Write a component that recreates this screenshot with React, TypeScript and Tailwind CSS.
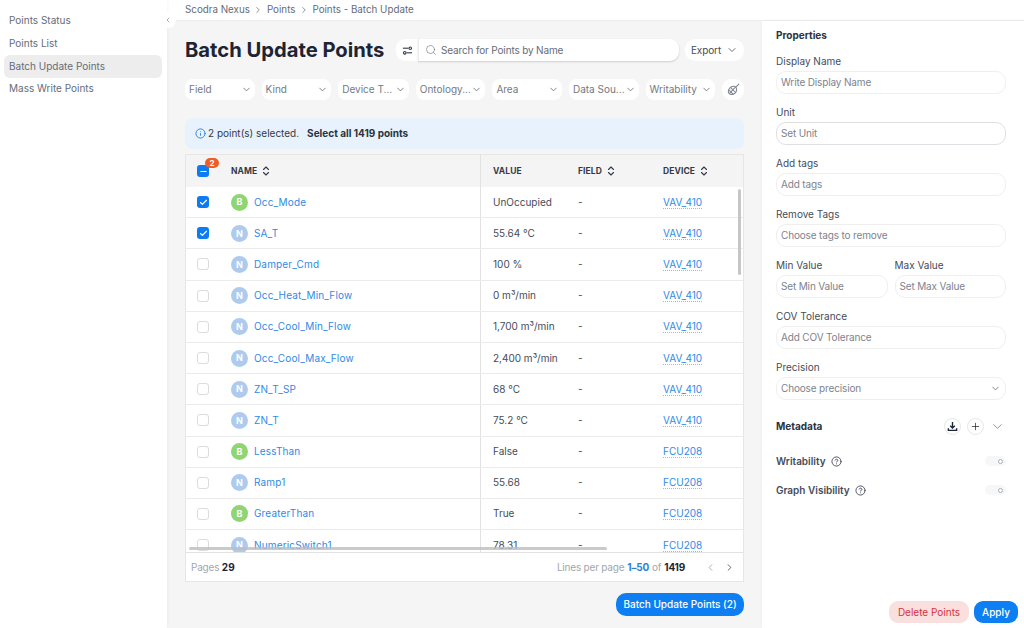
import { ChevronDown, ChevronLeft, ChevronRight, ChevronsUpDown, Check, Minus, Search, Info, Plus, CircleHelp } from "lucide-react";

const navItems = ["Points Status", "Points List", "Batch Update Points", "Mass Write Points"];

const filters = [
  { label: "Field", width: "w-[70px]" },
  { label: "Kind", width: "w-[70px]" },
  { label: "Device T...", width: "w-[71px]" },
  { label: "Ontology...", width: "w-[70px]" },
  { label: "Area", width: "w-[70px]" },
  { label: "Data Sou...", width: "w-[70px]" },
  { label: "Writability", width: "w-[70px]" },
];

const rows = [
  { kind: "B", name: "Occ_Mode", value: "UnOccupied", device: "VAV_410", checked: true },
  { kind: "N", name: "SA_T", value: "55.64 °C", device: "VAV_410", checked: true },
  { kind: "N", name: "Damper_Cmd", value: "100 %", device: "VAV_410" },
  { kind: "N", name: "Occ_Heat_Min_Flow", value: "0 m³/min", device: "VAV_410" },
  { kind: "N", name: "Occ_Cool_Min_Flow", value: "1,700 m³/min", device: "VAV_410" },
  { kind: "N", name: "Occ_Cool_Max_Flow", value: "2,400 m³/min", device: "VAV_410" },
  { kind: "N", name: "ZN_T_SP", value: "68 °C", device: "VAV_410" },
  { kind: "N", name: "ZN_T", value: "75.2 °C", device: "VAV_410" },
  { kind: "B", name: "LessThan", value: "False", device: "FCU208" },
  { kind: "N", name: "Ramp1", value: "55.68", device: "FCU208" },
  { kind: "B", name: "GreaterThan", value: "True", device: "FCU208" },
  { kind: "N", name: "NumericSwitch1", value: "78.31", device: "FCU208" },
];

function SortIcon() {
  return <ChevronsUpDown className="w-[12px] h-[12px] text-[#333a47] ml-[3px]" strokeWidth={2.2} />;
}

function Field({ label, placeholder, darker }: { label: string; placeholder: string; darker?: boolean }) {
  return (
    <div className="flex-1 min-w-0">
      <div className="h-[16px] text-[10px] leading-[12px] text-[#454c59]">{label}</div>
      <div
        className={`h-[23px] rounded-[10px] border px-[4px] flex items-center text-[10px] tracking-[-0.15px] text-[#7d838e] ${
          darker ? "border-[#dedfe2]" : "border-[#efefef]"
        }`}
      >
        {placeholder}
      </div>
    </div>
  );
}

function Toggle() {
  return (
    <div className="w-[21px] h-[10px] rounded-full bg-[#f6f7f9] flex items-center justify-end pr-[3px]">
      <div className="w-[5px] h-[5px] rounded-full border border-[#a9adb4] bg-white" />
    </div>
  );
}

export default function App() {
  return (
    <div className="w-[1024px] h-[628px] overflow-hidden flex bg-[#f5f5f5] text-[#454c59] font-['Inter','Liberation_Sans',sans-serif]">
      {/* Sidebar */}
      <aside className="relative w-[167px] shrink-0 bg-white pt-[9.5px] px-[4px] shadow-[0_0_4px_rgba(0,0,0,0.06)] z-10">
        {navItems.map((item) => (
          <div
            key={item}
            className={`h-[22.7px] pl-[5px] flex items-center rounded-[6px] w-[158px] text-[10px] text-[#666c77] ${
              item === "Batch Update Points" ? "bg-[#ededed] text-[#474d59]" : ""
            }`}
          >
            {item}
          </div>
        ))}
        <div className="absolute left-[160px] top-[12px] w-[16px] h-[16px] rounded-full bg-white flex items-center justify-center">
          <ChevronLeft className="w-[8px] h-[8px] text-[#777d87]" strokeWidth={2} />
        </div>
      </aside>

      <div className="flex-1 min-w-0 flex flex-col">
        {/* Breadcrumb bar */}
        <div className="h-[20px] shrink-0 bg-white pl-[18px] flex items-center text-[9.8px] text-[#666c77] shadow-[0_1px_1px_rgba(0,0,0,0.03)]">
          <span>Scodra Nexus</span>
          <ChevronRight className="w-[10px] h-[10px] mx-[3.5px] text-[#777d87]" />
          <span>Points</span>
          <ChevronRight className="w-[10px] h-[10px] mx-[3.5px] text-[#777d87]" />
          <span>Points - Batch Update</span>
        </div>

        <div className="flex-1 min-h-0 flex">
          {/* Main column */}
          <main className="w-[595px] shrink-0 pl-[18px] pr-[18px] flex flex-col">
            {/* Title row */}
            <div className="flex items-center mt-[18px] h-[24px]">
              <h1 className="w-[211px] text-[20.2px] leading-[24px] font-bold text-[#1d2433] whitespace-nowrap">
                Batch Update Points
              </h1>
              <div className="w-[22px] h-[22px] bg-white rounded-l-[9px] flex items-center justify-center">
                <svg viewBox="0 0 12 12" className="w-[11px] h-[11px] text-[#333a47]" fill="none" stroke="currentColor" strokeWidth="1.2">
                  <path d="M1 3.5h6" />
                  <circle cx="9" cy="3.5" r="1.4" />
                  <path d="M11 8.5H5" />
                  <circle cx="3" cy="8.5" r="1.4" />
                </svg>
              </div>
              <div className="w-[261px] h-[22px] bg-white rounded-r-[9px] border-l border-[#ececec] shadow-[0_1px_2px_rgba(0,0,0,0.16)] flex items-center pl-[6px] text-[10px] tracking-[-0.15px] text-[#666c77]">
                <Search className="w-[12px] h-[12px] mr-[4px] text-[#666c77]" strokeWidth={1.2} />
                Search for Points by Name
              </div>
              <div className="ml-[6px] w-[59px] h-[22px] bg-white rounded-[10px] flex items-center justify-center gap-[5px] text-[10px] tracking-[-0.1px] text-[#454c59]">
                Export
                <ChevronDown className="w-[12px] h-[12px]" strokeWidth={1.6} />
              </div>
            </div>

            {/* Filters */}
            <div className="flex gap-[7px] mt-[17px] h-[22px]">
              {filters.map((f) => (
                <div
                  key={f.label}
                  className={`${f.width} h-[21px] bg-white rounded-[8px] flex items-center justify-between pl-[4px] pr-[3px] text-[10px] text-[#737985] whitespace-nowrap`}
                >
                  {f.label}
                  <ChevronDown className="w-[11px] h-[11px] text-[#666c77] shrink-0" strokeWidth={1.8} />
                </div>
              ))}
              <div className="w-[22px] h-[21px] bg-white rounded-[9px] flex items-center justify-center">
                <svg viewBox="0 0 14 14" className="w-[13px] h-[13px] text-[#7d838e]" fill="none" stroke="currentColor" strokeWidth="1.1">
                  <path d="M13 1 9 5" />
                  <path d="M6.6 3.6c2.4-.2 4.2 1.6 3.8 3.8-.4 2.6-2.8 4.8-5.2 5-2.2.2-4-1.6-3.8-3.8C1.6 6.2 4.2 3.8 6.6 3.6Z" />
                  <path d="M2 7.5l5 5M4 5l5.5 5.5M3 11l5.5-6" />
                </svg>
              </div>
            </div>

            {/* Selection notice */}
            <div className="mt-[17px] h-[31px] shrink-0 bg-[#e7f2fc] rounded-[8px] flex items-center pl-[10px] text-[10px] text-[#333a47]">
              <Info className="w-[11px] h-[11px] mr-[2px] text-[#1a84e6]" strokeWidth={2} />
              <span>2 point(s) selected.</span>
              <span className="ml-[8px] font-bold text-[#2b3240]">Select all 1419 points</span>
            </div>

            {/* Table */}
            <div className="relative mt-[5px] h-[428px] shrink-0 border border-[#e6e6e6] flex flex-col">
              <div className="h-[32px] shrink-0 flex items-center bg-[#f4f4f4] text-[8.5px] font-bold tracking-[0.1px] text-[#333a47]">
                <div className="relative w-[45px] pl-[11px]">
                  <div className="w-[12px] h-[12px] rounded-[3px] bg-[#0d7bf2] flex items-center justify-center">
                    <Minus className="w-[9px] h-[9px] text-white" strokeWidth={3} />
                  </div>
                  <div className="absolute left-[19px] -top-[7px] w-[14px] h-[10px] rounded-full bg-[#ee5d26] text-white text-[8px] font-bold leading-[10px] text-center">
                    2
                  </div>
                </div>
                <div className="w-[250px] flex items-center h-full border-r border-[#e2e2e2]">
                  NAME
                  <SortIcon />
                </div>
                <div className="w-[97px] pl-[12px]">VALUE</div>
                <div className="w-[85px] flex items-center">
                  FIELD
                  <SortIcon />
                </div>
                <div className="flex items-center">
                  DEVICE
                  <SortIcon />
                </div>
              </div>

              <div className="flex-1 min-h-0 overflow-hidden bg-white">
                {rows.map((row) => (
                  <div key={row.name} className="h-[31.2px] flex items-center border-b border-[#ebebeb] text-[10px]">
                    <div className="w-[45px] pl-[11px]">
                      {row.checked ? (
                        <div className="w-[12px] h-[12px] rounded-[3px] bg-[#0d7bf2] flex items-center justify-center">
                          <Check className="w-[9px] h-[9px] text-white" strokeWidth={3} />
                        </div>
                      ) : (
                        <div className="w-[12px] h-[12px] rounded-[3px] border border-[#dcdcdc] bg-white" />
                      )}
                    </div>
                    <div className="w-[250px] flex items-center h-full border-r border-[#e2e2e2]">
                      <div
                        className={`w-[17px] h-[17px] rounded-full text-white text-[9px] font-bold flex items-center justify-center ${
                          row.kind === "B" ? "bg-[#8fd672]" : "bg-[#aecbee]"
                        }`}
                      >
                        {row.kind}
                      </div>
                      <span className="ml-[6px] tracking-[0.15px] text-[#2f8ae6]">{row.name}</span>
                    </div>
                    <div className="w-[97px] pl-[12px] text-[#454c59]">{row.value}</div>
                    <div className="w-[85px] text-[#454c59]">-</div>
                    <div className="text-[#2f8ae6] underline decoration-dotted decoration-[#8fbdf0] underline-offset-2">
                      {row.device}
                    </div>
                  </div>
                ))}
              </div>

              <div className="h-[29px] shrink-0 bg-white border-t border-[#e2e2e2] flex items-center justify-between pl-[5px] pr-[8px] text-[10px] tracking-[-0.2px] text-[#a2a6ad]">
                <div>
                  Pages <span className="tracking-normal font-bold text-[#1d2433]">29</span>
                </div>
                <div className="flex items-center">
                  <span>Lines per page</span>
                  <span className="ml-[3px] font-bold text-[#2f7fd6]">1–50</span>
                  <span className="mx-[3px]">of</span>
                  <span className="font-bold text-[#1d2433]">1419</span>
                  <ChevronLeft className="w-[11px] h-[11px] ml-[20px] text-[#a2a6ad]" />
                  <ChevronRight className="w-[11px] h-[11px] ml-[8px] text-[#555b66]" />
                </div>
              </div>

              {/* Scrollbars lie over the rows */}
              <div className="absolute left-[552px] top-[34px] w-[3px] h-[86px] rounded-full bg-[#c6c6c6]" />
              <div className="absolute left-[3px] top-[392px] w-[418px] h-[3px] rounded-full bg-[#bdbdbd]/80" />
            </div>

            <div className="flex justify-end mt-[11px]">
              <button className="w-[128px] h-[23px] rounded-[10px] bg-[#0d7ff2] text-white text-[10px] font-medium">
                Batch Update Points (2)
              </button>
            </div>
          </main>

          {/* Properties panel */}
          <aside className="flex-1 mt-[1px] bg-white shadow-[0_0_3px_rgba(0,0,0,0.05)] pl-[14px] pr-[18px] flex flex-col">
            <div className="mt-[7px] h-[14px] text-[10px] leading-[14px] font-bold text-[#2b3240]">Properties</div>
            <div className="mt-[13px] flex flex-col gap-[12px]">
              <Field label="Display Name" placeholder="Write Display Name" />
              <Field label="Unit" placeholder="Set Unit" darker />
              <Field label="Add tags" placeholder="Add tags" />
              <Field label="Remove Tags" placeholder="Choose tags to remove" />
              <div className="flex gap-[7px]">
                <Field label="Min Value" placeholder="Set Min Value" />
                <Field label="Max Value" placeholder="Set Max Value" />
              </div>
              <Field label="COV Tolerance" placeholder="Add COV Tolerance" />
              <div>
                <div className="h-[16px] text-[10px] leading-[12px] text-[#454c59]">Precision</div>
                <div className="h-[23px] rounded-[10px] border border-[#efefef] px-[4px] flex items-center justify-between text-[10px] tracking-[-0.15px] text-[#7d838e]">
                  Choose precision
                  <ChevronDown className="w-[11px] h-[11px] text-[#666c77]" strokeWidth={1.8} />
                </div>
              </div>
            </div>

            <div className="mt-[18px] h-[17px] flex items-center text-[10px] font-bold text-[#2b3240]">
              <span className="flex-1">Metadata</span>
              <div className="w-[17px] h-[17px] rounded-full border border-[#e6e6e6] flex items-center justify-center">
                <svg viewBox="0 0 12 12" className="w-[11px] h-[11px] text-[#1d2433]" fill="none" stroke="currentColor" strokeWidth="1.5">
                  <path d="M6 1v6.5M3.5 5.2 6 7.7l2.5-2.5" />
                  <path d="M1.5 8v2.2h9V8" />
                </svg>
              </div>
              <div className="ml-[6px] w-[17px] h-[17px] rounded-full border border-[#e6e6e6] flex items-center justify-center">
                <Plus className="w-[11px] h-[11px] text-[#1d2433]" strokeWidth={1.6} />
              </div>
              <ChevronDown className="ml-[6px] mr-[1px] w-[15px] h-[15px] text-[#777d87]" strokeWidth={1.3} />
            </div>

            <div className="mt-[19px] h-[14px] flex items-center justify-between text-[10px] font-semibold text-[#454c59]">
              <span className="flex items-center gap-[5px]">
                Writability
                <CircleHelp className="w-[11px] h-[11px] text-[#333a47]" strokeWidth={1.8} />
              </span>
              <Toggle />
            </div>
            <div className="mt-[15px] h-[14px] flex items-center justify-between text-[10px] font-semibold text-[#454c59]">
              <span className="flex items-center gap-[5px]">
                Graph Visibility
                <CircleHelp className="w-[11px] h-[11px] text-[#333a47]" strokeWidth={1.8} />
              </span>
              <Toggle />
            </div>

            <div className="mt-auto mb-[5px] -mr-[12px] flex justify-end gap-[5px]">
              <button className="w-[80px] h-[22px] rounded-[9px] bg-[#fadfdf] text-[#d8323c] text-[10px]">Delete Points</button>
              <button className="w-[44px] h-[22px] rounded-[9px] bg-[#0d7ff2] text-white text-[10px] font-medium">Apply</button>
            </div>
          </aside>
        </div>
      </div>
    </div>
  );
}
